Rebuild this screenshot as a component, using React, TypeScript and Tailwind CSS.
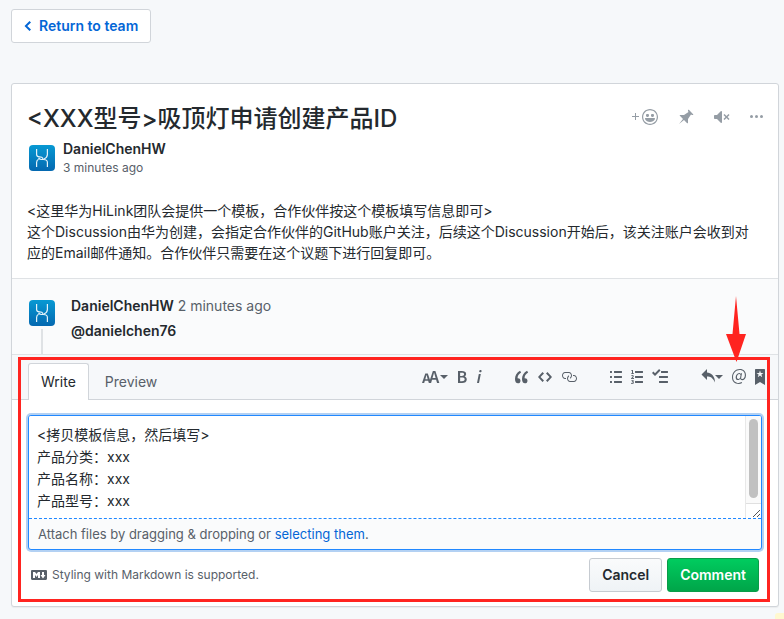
import type { ReactNode } from "react";

const paths = {
  chevronLeft: "M5.5 3L7 4.5 3.25 8 7 11.5 5.5 13l-5-5 5-5z",
  plus: "M4 4H3v3H0v1h3v3h1V8h3V7H4V4z",
  smiley:
    "M8 0C3.58 0 0 3.58 0 8s3.58 8 8 8 8-3.58 8-8-3.58-8-8-8zm4.81 12.81a6.72 6.72 0 0 1-2.17 1.45c-.83.36-1.72.53-2.64.53-.92 0-1.81-.17-2.64-.53-.81-.34-1.55-.83-2.17-1.45a6.773 6.773 0 0 1-1.45-2.17A6.59 6.59 0 0 1 1.21 8c0-.92.17-1.81.53-2.64.34-.81.83-1.55 1.45-2.17.62-.62 1.36-1.11 2.17-1.45A6.59 6.59 0 0 1 8 1.21c.92 0 1.81.17 2.64.53.81.34 1.55.83 2.17 1.45.62.62 1.11 1.36 1.45 2.17.36.83.53 1.72.53 2.64 0 .92-.17 1.81-.53 2.64-.34.81-.83 1.55-1.45 2.17zM4 6.8v-.59c0-.66.53-1.19 1.2-1.19h.59c.66 0 1.19.53 1.19 1.19v.59c0 .67-.53 1.2-1.19 1.2H5.2C4.53 8 4 7.47 4 6.8zm5 0v-.59c0-.66.53-1.19 1.2-1.19h.59c.66 0 1.19.53 1.19 1.19v.59c0 .67-.53 1.2-1.19 1.2h-.59C9.53 8 9 7.47 9 6.8zm4 3.2c-.72 1.88-2.91 3-5 3s-4.28-1.13-5-3c-.14-.39.23-1 .66-1h8.59c.41 0 .89.61.75 1z",
  pin: "M10 1.2V2l.5 1L6 6H2.2c-.44 0-.67.53-.34.86L5 10l-4 5 5-4 3.14 3.14a.5.5 0 0 0 .86-.34V10l3-4.5 1 .5h.8c.44 0 .67-.53.34-.86L10.86.86a.5.5 0 0 0-.86.34z",
  mute: "M8 2.81v10.38c0 .67-.81 1-1.28.53L3 10H1c-.55 0-1-.45-1-1V7c0-.55.45-1 1-1h2l3.72-3.72C7.19 1.81 8 2.14 8 2.81zm7.53 3.22l-1.06-1.06-1.97 1.97-1.97-1.97-1.06 1.06L11.44 8 9.47 9.97l1.06 1.06 1.97-1.97 1.97 1.97 1.06-1.06L13.56 8l1.97-1.97z",
  kebab:
    "M1.5 9a1.5 1.5 0 1 0 0-3 1.5 1.5 0 0 0 0 3zm5 0a1.5 1.5 0 1 0 0-3 1.5 1.5 0 0 0 0 3zm5 0a1.5 1.5 0 1 0 0-3 1.5 1.5 0 0 0 0 3z",
  textSize:
    "M13.62 9.08L12.1 3.66h-.06l-1.5 5.42h3.08zM5.7 10.13S4.68 6.52 4.53 6.02h-.08l-1.13 4.11H5.7zM17.31 14h-2.25l-.95-3.25h-4.07L9.09 14H6.84l-.69-2.33H2.87L2.17 14H0l3.3-9.59h2.5l2.17 6.34L10.86 2h2.52l3.94 12h-.01z",
  bold: "M1 2h3.83c2.48 0 4.3.75 4.3 2.95 0 1.14-.63 2.23-1.67 2.61v.06c1.33.3 2.3 1.23 2.3 2.86 0 2.39-1.97 3.52-4.61 3.52H1V2zm3.66 4.95c1.67 0 2.38-.66 2.38-1.69 0-1.17-.78-1.61-2.34-1.61H3.13v3.3h1.53zm.27 5.39c1.77 0 2.75-.64 2.75-1.98 0-1.27-.95-1.81-2.75-1.81h-1.8v3.8h1.8v-.01z",
  italic:
    "M2.81 5h1.98L3 14H1l1.81-9zm.36-2.7c0-.7.58-1.3 1.33-1.3.56 0 1.13.38 1.13 1.03 0 .75-.59 1.3-1.33 1.3-.58 0-1.13-.38-1.13-1.03z",
  quote:
    "M6.16 3.5C3.73 5.06 2.55 6.67 2.55 9.36c.16-.05.3-.05.44-.05 1.27 0 2.5.86 2.5 2.41 0 1.61-1.03 2.61-2.5 2.61-1.9 0-2.99-1.52-2.99-4.25 0-3.8 1.75-6.53 5.02-8.42L6.16 3.5zm7 0c-2.43 1.56-3.61 3.17-3.61 5.86.16-.05.3-.05.44-.05 1.27 0 2.5.86 2.5 2.41 0 1.61-1.03 2.61-2.5 2.61-1.89 0-2.98-1.52-2.98-4.25 0-3.8 1.75-6.53 5.02-8.42l1.14 1.84h-.01z",
  code: "M9.5 3L8 4.5 11.5 8 8 11.5 9.5 13 14 8 9.5 3zm-5 0L0 8l4.5 5L6 11.5 2.5 8 6 4.5 4.5 3z",
  link: "M4 9h1v1H4c-1.5 0-3-1.69-3-3.5S2.55 3 4 3h4c1.45 0 3 1.69 3 3.5 0 1.41-.91 2.72-2 3.25V8.59c.58-.45 1-1.27 1-2.09C10 5.22 8.98 4 8 4H4c-.98 0-2 1.22-2 2.5S3 9 4 9zm9-3h-1v1h1c1 0 2 1.22 2 2.5S13.98 12 13 12H9c-.98 0-2-1.22-2-2.5 0-.83.42-1.64 1-2.09V6.25c-1.09.53-2 1.84-2 3.25C6 11.31 7.55 13 9 13h4c1.45 0 3-1.69 3-3.5S14.5 6 13 6z",
  listUnordered:
    "M2 13c0 .59 0 1-.59 1H.59C0 14 0 13.59 0 13c0-.59 0-1 .59-1h.81c.59 0 .59.41.59 1H2zm2.59-9h6.81c.59 0 .59-.41.59-1 0-.59 0-1-.59-1H4.59C4 2 4 2.41 4 3c0 .59 0 1 .59 1zM1.41 7H.59C0 7 0 7.41 0 8c0 .59 0 1 .59 1h.81c.59 0 .59-.41.59-1 0-.59 0-1-.59-1h.01zm0-5H.59C0 2 0 2.41 0 3c0 .59 0 1 .59 1h.81c.59 0 .59-.41.59-1 0-.59 0-1-.59-1h.01zm10 5H4.59C4 7 4 7.41 4 8c0 .59 0 1 .59 1h6.81c.59 0 .59-.41.59-1 0-.59 0-1-.59-1h.01zm0 5H4.59C4 12 4 12.41 4 13c0 .59 0 1 .59 1h6.81c.59 0 .59-.41.59-1 0-.59 0-1-.59-1h.01z",
  listOrdered:
    "M12.01 13c0 .59 0 1-.59 1H4.6c-.59 0-.59-.41-.59-1 0-.59 0-1 .59-1h6.81c.59 0 .59.41.59 1h.01zM4.6 4h6.81C12 4 12 3.59 12 3c0-.59 0-1-.59-1H4.6c-.59 0-.59.41-.59 1 0 .59 0 1 .59 1zm6.81 3H4.6c-.59 0-.59.41-.59 1 0 .59 0 1 .59 1h6.81C12 9 12 8.59 12 8c0-.59 0-1-.59-1zM2 1h-.72c-.3.19-.58.25-1.03.34V2H1v2.14H.16V5H3v-.86H2V1zm.25 8.13c-.17 0-.45.03-.66.06.53-.56 1.14-1.25 1.14-1.89C2.72 6.52 2.17 6 1.38 6c-.59 0-.97.2-1.38.64l.58.58c.19-.19.38-.38.64-.38.28 0 .48.16.48.52 0 .53-.77 1.2-1.7 2.06V10h3v-.88h-.75v.01zm-.08 3.78v-.03c.44-.19.64-.47.64-.86 0-.7-.56-1.11-1.44-1.11-.48 0-.89.19-1.28.52l.55.64c.25-.2.44-.31.69-.31.27 0 .42.13.42.36 0 .27-.2.44-.86.44v.75c.83 0 .98.17.98.47 0 .25-.23.38-.58.38-.28 0-.56-.14-.81-.38l-.48.66c.3.36.77.56 1.41.56.83 0 1.53-.41 1.53-1.16 0-.5-.31-.81-.77-.94v.01z",
  tasklist:
    "M15.41 9H7.59C7 9 7 8.59 7 8c0-.59 0-1 .59-1h7.81c.59 0 .59.41.59 1 0 .59 0 1-.59 1h.01zM9.59 4C9 4 9 3.59 9 3c0-.59 0-1 .59-1h5.81c.59 0 .59.41.59 1 0 .59 0 1-.59 1H9.59zM0 3.91l1.41-1.3L3 4.2 7.09 0 8.5 1.41 3 6.91l-3-3zM7.59 12h7.81c.59 0 .59.41.59 1 0 .59 0 1-.59 1H7.59C7 14 7 13.59 7 13c0-.59 0-1 .59-1z",
  reply: "M6 3.5c3.92.44 8 3.125 8 10-2.312-5.062-4.75-6-8-6V11L.5 5.5 6 0v3.5z",
  mention:
    "M6.58 15c1.25 0 2.52-.31 3.56-.94l-.42-.94c-.84.52-1.89.83-3.03.83-3.23 0-5.64-2.08-5.64-5.72 0-4.37 3.23-7.18 6.58-7.18 3.45 0 5.22 2.19 5.22 5.2 0 2.39-1.34 3.86-2.5 3.86-1.05 0-1.36-.73-1.05-2.19l.73-3.75H8.98l-.11.72c-.41-.63-.94-.83-1.56-.83-2.19 0-3.66 2.39-3.66 4.38 0 1.67.94 2.61 2.3 2.61.84 0 1.67-.53 2.3-1.25.11.94.94 1.45 1.98 1.45 1.67 0 3.77-1.67 3.77-5C14 2.61 11.59 0 7.83 0 3.66 0 0 3.33 0 8.33 0 12.71 2.92 15 6.58 15zm-.31-5c-.73 0-1.36-.52-1.36-1.67 0-1.45.94-3.22 2.41-3.22.52 0 .84.2 1.25.83l-.52 3.02c-.63.73-1.25 1.05-1.78 1.05V10z",
  savedReply:
    "M9 0H1C.27 0 0 .27 0 1v15l5-3.09L10 16V1c0-.73-.27-1-1-1zm-.78 4.25L6.36 5.61l.72 2.16c.06.22-.02.28-.2.17L5 6.6 3.12 7.94c-.19.11-.25.05-.2-.17l.72-2.16-1.86-1.36c-.17-.16-.14-.23.09-.23l2.3-.03.7-2.16h.25l.7 2.16 2.3.03c.23 0 .27.08.09.23h.01z",
  markdown:
    "M14.85 3H1.15C.52 3 0 3.52 0 4.15v7.69C0 12.48.52 13 1.15 13h13.69c.64 0 1.15-.52 1.15-1.15v-7.7C16 3.52 15.48 3 14.85 3zM9 11H7V8L5.5 9.92 4 8v3H2V5h2l1.5 2L7 5h2v6zm2.99.5L9.5 8H11V5h2v3h1.5l-2.51 3.5z",
};

function Icon({ name, width }: { name: keyof typeof paths; width: number }) {
  return (
    <svg
      viewBox={`0 0 ${width} 16`}
      width={width}
      height={16}
      fill="currentColor"
      aria-hidden="true"
      className="shrink-0"
    >
      <path d={paths[name]} />
    </svg>
  );
}

function Caret() {
  return (
    <svg viewBox="0 0 8 4" width="8" height="4" fill="currentColor" aria-hidden="true" className="mb-px">
      <path d="M0 0h8L4 4z" />
    </svg>
  );
}

function Tool({ label, children }: { label: string; children: ReactNode }) {
  return (
    <button type="button" aria-label={label} className="flex items-center">
      {children}
    </button>
  );
}

function Avatar() {
  return (
    <svg viewBox="0 0 26 26" width="26" height="26" role="img" aria-label="DanielChenHW" className="shrink-0">
      <defs>
        <linearGradient id="avatar" x1="0" y1="0" x2="0" y2="1">
          <stop offset="0" stopColor="#0799d3" />
          <stop offset="1" stopColor="#0468b0" />
        </linearGradient>
      </defs>
      <rect width="26" height="26" rx="4" fill="url(#avatar)" />
      <g fill="none" stroke="#e4f2fa" strokeWidth="1.2">
        <path d="M7.600 4v5.500c0 1.800 1.200 2.300 3 2.300 3.600 0 4.400 2.700 1.900 2.700-1.500 0-2.300-.7-3-1.500" />
        <path d="M18.400 4v5.500c0 2.200-1.200 3.500-3.400 4.500" />
        <path d="M7.600 22v-4.500c0-1.700.7-2.700 2-3.300" />
        <path d="M18.400 22v-4.500c0-1.900-1.400-3-3.900-3h-2" />
      </g>
    </svg>
  );
}

export default function App() {
  return (
    <div className="relative min-h-screen bg-[#f6f8fa] pt-[9px] pr-[5px] pb-3 pl-[11px] font-[Inter,'Noto_Sans_CJK_SC',sans-serif] text-sm text-[#24292e]">
      <a
        href="#team"
        className="inline-flex h-[34px] items-center gap-[7px] rounded-[3px] border border-[#d1d5da] bg-white px-3 font-semibold text-[#0366d6]"
      >
        <Icon name="chevronLeft" width={8} />
        Return to team
      </a>

      <main className="mt-10 rounded-[3px] border border-[#d1d5da] bg-white shadow-[0_1px_1px_rgba(0,0,0,0.05)]">
        <article className="px-[15px] py-[15px]">
          <header className="flex items-start justify-between">
            <h1 className="text-2xl leading-10 font-medium">&lt;XXX型号&gt;吸顶灯申请创建产品ID</h1>
            <div className="flex h-9 items-center gap-5 text-[#959da5]">
              <Tool label="Add reaction">
                <Icon name="plus" width={7} />
                <span className="ml-[3px]">
                  <Icon name="smiley" width={16} />
                </span>
              </Tool>
              <Tool label="Pin discussion">
                <Icon name="pin" width={16} />
              </Tool>
              <Tool label="Mute">
                <Icon name="mute" width={16} />
              </Tool>
              <Tool label="More options">
                <Icon name="kebab" width={13} />
              </Tool>
            </div>
          </header>
          <div className="flex items-center gap-2 pl-[2px]">
            <Avatar />
            <div className="flex flex-col">
              <a href="#author" className="leading-[19px] font-semibold">
                DanielChenHW
              </a>
              <span className="text-xs leading-[19px] text-[#586069]">3 minutes ago</span>
            </div>
          </div>
          <div className="mt-[23px] pr-2 leading-[21px]">
            <p>&lt;这里华为HiLink团队会提供一个模板，合作伙伴按这个模板填写信息即可&gt;</p>
            <p>
              这个Discussion由华为创建，会指定合作伙伴的GitHub账户关注，后续这个Discussion开始后，该关注账户会收到对应的Email邮件通知。合作伙伴只需要在这个议题下进行回复即可。
            </p>
          </div>
        </article>

        <section className="flex gap-4 border-y border-[#dfe2e5] bg-[#fafbfc] pl-[17px]">
          <div className="flex flex-col items-center pt-[21px]">
            <Avatar />
            <div className="mt-[3px] w-[2px] grow bg-[#dfe2e5]" />
          </div>
          <div className="pt-[14px] pb-[11px] leading-[25px]">
            <p>
              <a href="#author" className="font-semibold">
                DanielChenHW
              </a>{" "}
              <span className="text-[#586069]">2 minutes ago</span>
            </p>
            <p>
              <a href="#danielchen76" className="font-semibold">
                @danielchen76
              </a>
            </p>
          </div>
        </section>

        <form className="relative" onSubmit={(e) => e.preventDefault()}>
          <div className="flex items-end justify-between border-b border-[#d1d5da] bg-[#f6f8fa] pr-[13px] pl-4">
            <div role="tablist" className="-mb-px flex">
              <button
                type="button"
                role="tab"
                aria-selected="true"
                className="h-[37px] rounded-t-[3px] border border-b-0 border-[#d1d5da] bg-white px-3"
              >
                Write
              </button>
              <button type="button" role="tab" aria-selected="false" className="h-[37px] px-4 text-[#586069]">
                Preview
              </button>
            </div>
            <div className="flex h-11 items-center gap-[33px] text-[#586069]">
              <div className="flex gap-[9px]">
                <Tool label="Text size">
                  <Icon name="textSize" width={18} />
                  <Caret />
                </Tool>
                <Tool label="Bold">
                  <Icon name="bold" width={10} />
                </Tool>
                <Tool label="Italic">
                  <Icon name="italic" width={6} />
                </Tool>
              </div>
              <div className="flex gap-[9px]">
                <Tool label="Quote">
                  <Icon name="quote" width={14} />
                </Tool>
                <Tool label="Code">
                  <Icon name="code" width={14} />
                </Tool>
                <Tool label="Link">
                  <Icon name="link" width={16} />
                </Tool>
              </div>
              <div className="flex gap-[9px]">
                <Tool label="Bulleted list">
                  <Icon name="listUnordered" width={12} />
                </Tool>
                <Tool label="Numbered list">
                  <Icon name="listOrdered" width={12} />
                </Tool>
                <Tool label="Task list">
                  <Icon name="tasklist" width={16} />
                </Tool>
              </div>
              <div className="flex gap-[9px]">
                <Tool label="Reply">
                  <Icon name="reply" width={14} />
                  <Caret />
                </Tool>
                <Tool label="Mention">
                  <Icon name="mention" width={14} />
                </Tool>
                <Tool label="Saved replies">
                  <Icon name="savedReply" width={10} />
                </Tool>
              </div>
            </div>
          </div>

          <div className="px-4 pt-[15px] pb-[14px]">
            <div className="overflow-hidden rounded-[3px] border border-[#2188ff] bg-[#fafbfc] shadow-[0_0_0_2px_rgba(3,102,214,0.3)]">
              <div className="flex border-b border-dashed border-[#2188ff] bg-white">
                <textarea
                  aria-label="Comment body"
                  rows={4}
                  defaultValue={"<拷贝模板信息，然后填写>\n产品分类：xxx\n产品名称：xxx\n产品型号：xxx"}
                  className="h-[102px] min-w-0 grow resize-none overflow-hidden px-2 pt-2 leading-[22px] outline-none"
                />
                <div className="flex w-4 flex-col border-l border-[#e8e8e8] bg-[#fafafa]" aria-hidden="true">
                  <div className="mx-[3px] mt-[3px] h-[79px] rounded-full bg-[#c1c1c1]" />
                  <div className="mt-auto flex h-[15px] items-end justify-end border-t border-[#e0e0e0] bg-white">
                    <svg viewBox="0 0 9 9" width="9" height="9" stroke="#555" strokeWidth="1">
                      <path d="M1 8L8 1M5 8L8 5" />
                    </svg>
                  </div>
                </div>
              </div>
              <p className="px-[9px] text-[13px] leading-[30px] text-[#586069]">
                Attach files by dragging &amp; dropping or{" "}
                <a href="#files" className="text-[#0366d6]">
                  selecting them
                </a>
                .
              </p>
            </div>
            <div className="mt-2 flex items-center gap-[5px] pr-[3px] pl-[3px]">
              <a href="#markdown" className="flex items-center gap-[5px] text-xs text-[#586069]">
                <Icon name="markdown" width={16} />
                Styling with Markdown is supported.
              </a>
              <button
                type="button"
                className="ml-auto h-[34px] rounded-[3px] border border-[#c6cbd1] bg-linear-to-b from-[#fafbfc] to-[#eff3f6] px-3 font-semibold"
              >
                Cancel
              </button>
              <button
                type="submit"
                className="h-[34px] rounded-[3px] border border-[#0a9c48] bg-linear-to-b from-[#00cc5f] to-[#00a549] px-3 font-semibold text-white"
              >
                Comment
              </button>
            </div>
          </div>

          <div className="pointer-events-none absolute top-[2px] right-2 bottom-1 left-[6px] border-3 border-[#ff2420]" />
          <svg
            viewBox="0 0 20 66"
            width="20"
            height="66"
            fill="#ff2420"
            aria-hidden="true"
            className="pointer-events-none absolute -top-[59px] right-8"
          >
            <path d="M10 0l3.500 38H20L10.500 66 0 38h6.500z" />
          </svg>
        </form>
      </main>
      <div className="absolute right-0 bottom-0 h-[6px] w-[9px] rounded-tl-[3px] bg-[#fff8cf]" />
    </div>
  );
}
